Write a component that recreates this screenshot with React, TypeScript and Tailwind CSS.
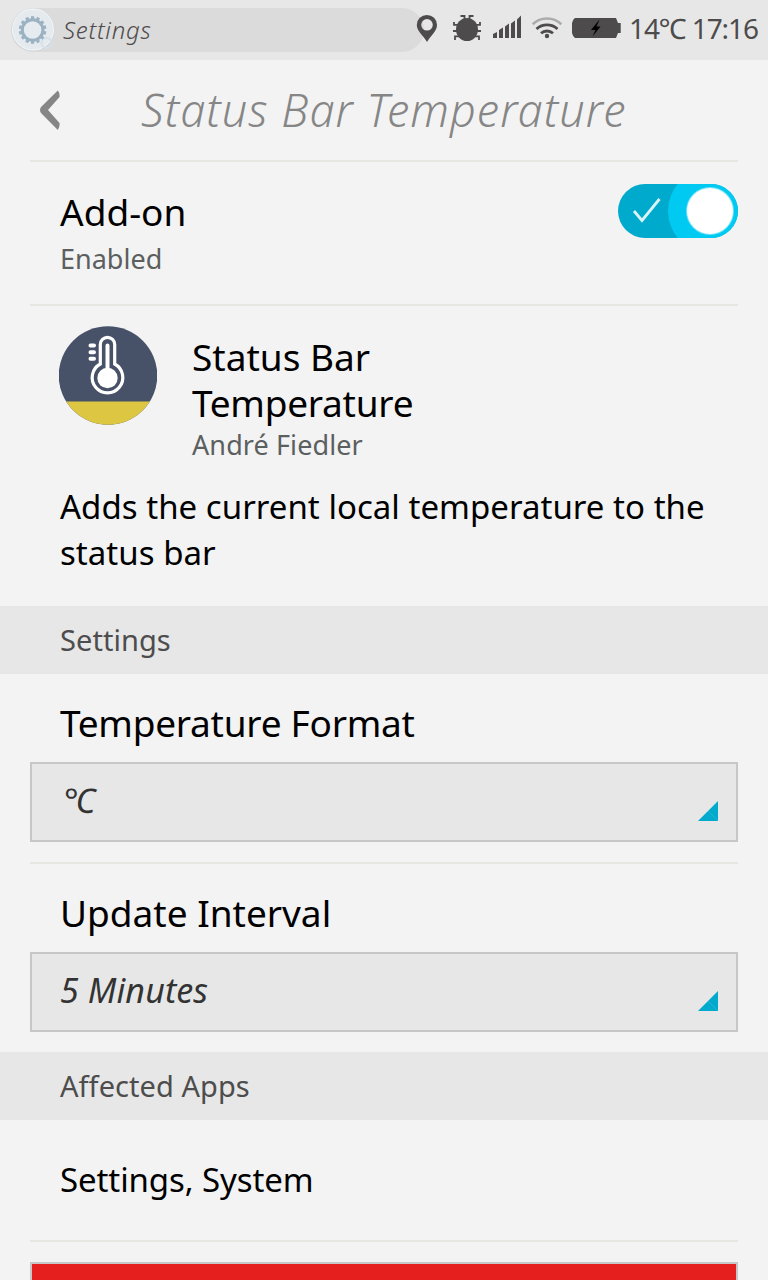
import React from "react";

function GearIcon() {
  const teeth = Array.from({ length: 14 }, (_, i) => (i * 360) / 14);
  return (
    <svg viewBox="0 0 44 44" className="h-11 w-11 shrink-0">
      <circle cx="22" cy="22" r="21.5" fill="#d2d6d8" />
      <circle cx="22" cy="21.5" r="21" fill="#f2f6f8" />
      <circle cx="22" cy="21.5" r="20" fill="#e4eaee" />
      <circle cx="35.5" cy="35" r="5" fill="none" stroke="#d6e0e8" strokeWidth="2" />
      <g fill="#9bb2c2">
        {teeth.map((a) => (
          <rect key={a} x="20" y="8.2" width="3.2" height="4" transform={`rotate(${a} 21.6 22)`} />
        ))}
      </g>
      <circle cx="21.6" cy="22" r="10.3" fill="#e5ebef" stroke="#9bb2c2" strokeWidth="3" />
    </svg>
  );
}

function StatusIcons() {
  return (
    <svg viewBox="416 0 206 60" className="h-[60px] w-[206px] shrink-0" fill="#4d4b4c">
      <path fillRule="evenodd" d="M427 42C423 35 416.8 31 416.8 25a10.1 10.1 0 0 1 20.2 0C437 31 431 35 427 42ZM427 19a5.8 5.8 0 1 0 0 11.600a5.800 5.800 0 0 0 0-11.600Z" />
      <ellipse cx="467" cy="29.500" rx="11" ry="11.500" />
      <g fill="none" stroke="#4d4b4c" strokeWidth="1.8">
        <path d="M460.500 16h4v3M473.500 16h-4v3M454 22v2.800h5M480 22v2.800h-5M453 31h28M455 40v-3.600h4M479 40v-3.600h-4" />
      </g>
      <path d="M493 38v-4l4-2v6ZM499 38v-8l4-2.500V38ZM505 38V26.500l4-3V38ZM511 38V23.500l4-3V38ZM517 38V19.500l4-4V38Z" />
      <g fill="none">
        <path d="M532.700 24.300a20.500 20.500 0 0 1 28.600 0" stroke="#ababab" strokeWidth="2.600" />
        <path d="M536.500 29a15.500 15.500 0 0 1 21 0M541 33.300a9 9 0 0 1 12 0" stroke="#4d4b4c" strokeWidth="2.800" />
      </g>
      <circle cx="547" cy="36" r="2.200" />
      <path d="M575 18h41l2 5h2.700v10H618l-2 5h-41q-2-1-3-5v-10q1-4 3-5Z" />
      <path d="M599.500 19.500 591 30 595.500 30 592.500 36.500 600.500 26.500 596.500 26.500Z" fill="#000" />
    </svg>
  );
}

function StatusBar() {
  return (
    <div className="flex h-[60px] items-center bg-[#e7e7e7] text-[#4d4b4c]">
      <div className="ml-[11px] flex h-11 w-[413px] shrink-0 items-center rounded-full bg-[#dbdbdb]">
        <GearIcon />
        <span className="ml-2 text-[24px] font-light italic tracking-[0.75px]">Settings</span>
      </div>
      <div className="-ml-2 flex items-center">
        <StatusIcons />
        <span className="-mt-1 ml-[7px] whitespace-nowrap text-[28px] leading-[56px] tracking-[-1.1px]">14℃ 17:16</span>
      </div>
    </div>
  );
}

function Toggle() {
  return (
    <svg viewBox="0 0 120 54" className="h-[54px] w-[120px] shrink-0">
      <defs>
        <clipPath id="track"><rect width="120" height="54" rx="27" /></clipPath>
      </defs>
      <g clipPath="url(#track)">
        <rect width="120" height="54" fill="#00aacc" />
        <circle cx="92" cy="27" r="42" fill="#00caf2" />
      </g>
      <circle cx="92" cy="27" r="24" fill="#70e2fa" />
      <circle cx="92" cy="27" r="23" fill="#fff" />
      <path d="M16 27 24 36.500 41.500 15" fill="none" stroke="#d9f3f8" strokeWidth="2.800" />
    </svg>
  );
}

function AddonIcon() {
  return (
    <svg viewBox="0 0 98 99" className="h-[99px] w-[98px] shrink-0">
      <defs>
        <clipPath id="disc"><circle cx="49" cy="49.500" r="49.300" /></clipPath>
      </defs>
      <g clipPath="url(#disc)">
        <rect width="98" height="99" fill="#475269" />
        <rect y="75.500" width="98" height="24" fill="#ddc642" />
      </g>
      <path d="M41.300 38V18.500a7.200 7.200 0 0 1 14.400 0V38A15.300 15.300 0 1 1 41.300 38Z" fill="none" stroke="#fff" strokeWidth="3.200" />
      <path d="M48.500 19.500V45M31.500 19.500h3.500M31.500 26.200h3.500M31.500 32.800h3.500" stroke="#fff" strokeWidth="4" strokeLinecap="round" />
      <circle cx="48.500" cy="52" r="10.200" fill="#fff" />
    </svg>
  );
}

function Select({ value, className = "" }: { value: string; className?: string }) {
  return (
    <div className="mx-[30px] flex h-20 justify-between border-2 border-[#c7c7c7] bg-[#e7e7e7] pr-[18px] pl-7">
      <span className={`text-[34px] leading-[72px] italic text-[#333] ${className}`}>{value}</span>
      <svg viewBox="0 0 20 20" className="mt-[37px] h-5 w-5">
        <path d="M20 0V20H0Z" fill="#00aacc" />
        <path d="M10 10 20 20" stroke="#30bbd7" strokeWidth=".7" />
      </svg>
    </div>
  );
}

function SectionHeader({ children }: { children: string }) {
  return (
    <h2 className="h-[68px] bg-[#e7e7e7] pl-[60px] text-[29px] leading-[68px] tracking-[0.05px] text-[#4d4d4d]">{children}</h2>
  );
}

function Divider() {
  return <div className="mx-[30px] h-0.5 bg-[#e6e6e2]" />;
}

export default function App() {
  return (
    <div className="h-[1280px] w-[768px] overflow-hidden bg-[#f3f3f3] font-['Noto_Sans','Open_Sans',sans-serif] text-black">
      <StatusBar />
      <header className="flex h-[100px] items-center">
        <svg viewBox="0 0 20 40" className="ml-10 h-10 w-5">
          <path d="M17.800 .5Q20 3 19.500 7L8 20 19.500 33Q20 37 17.800 40L1 23Q-1 20 1 17Z" fill="#868686" />
        </svg>
        <h1 className="ml-[81px] whitespace-nowrap text-[45px] leading-[100px] font-light italic tracking-[1.05px] text-[#868686]">Status Bar Temperature</h1>
      </header>
      <Divider />
      <section className="flex h-[142px] justify-between pr-[30px] pl-[60px] pt-[22px]">
        <div>
          <p className="text-[37px] leading-[56px]">Add-on</p>
          <p className="text-[27px] leading-[38px] text-[#5b5f5f]">Enabled</p>
        </div>
        <Toggle />
      </section>
      <Divider />
      <section className="h-[300px]">
        <div className="flex pt-5 pl-[59px]">
          <AddonIcon />
          <div className="pt-2 pl-[35px]">
            <p className="text-[37px] leading-[46px]">Status Bar<br /><span className="tracking-[-0.25px]">Temperature</span></p>
            <p className="text-[27px] leading-[38px] tracking-[0.1px] text-[#5b5f5f]">André Fiedler</p>
          </div>
        </div>
        <p className="mt-5 whitespace-nowrap pl-[60px] text-[33px] leading-[46px] tracking-[0.03px]">
          Adds the current local temperature to the<br />status bar
        </p>
      </section>
      <SectionHeader>Settings</SectionHeader>
      <p className="h-[88px] pl-[60px] text-[37px] leading-[98px] tracking-[-0.25px]">Temperature Format</p>
      <Select value="℃" className="pl-1" />
      <div className="h-5" />
      <Divider />
      <p className="h-[88px] pl-[60px] text-[37px] leading-[98px]">Update Interval</p>
      <Select value="5 Minutes" className="tracking-[0.1px]" />
      <div className="h-5" />
      <SectionHeader>Affected Apps</SectionHeader>
      <p className="h-[120px] pl-[60px] text-[33px] leading-[120px] tracking-[-0.1px]">Settings, System</p>
      <Divider />
      <button className="mx-[30px] mt-5 block h-20 w-[708px] border-2 border-[#c7c7c7] bg-[#e51e1e]" />
    </div>
  );
}
